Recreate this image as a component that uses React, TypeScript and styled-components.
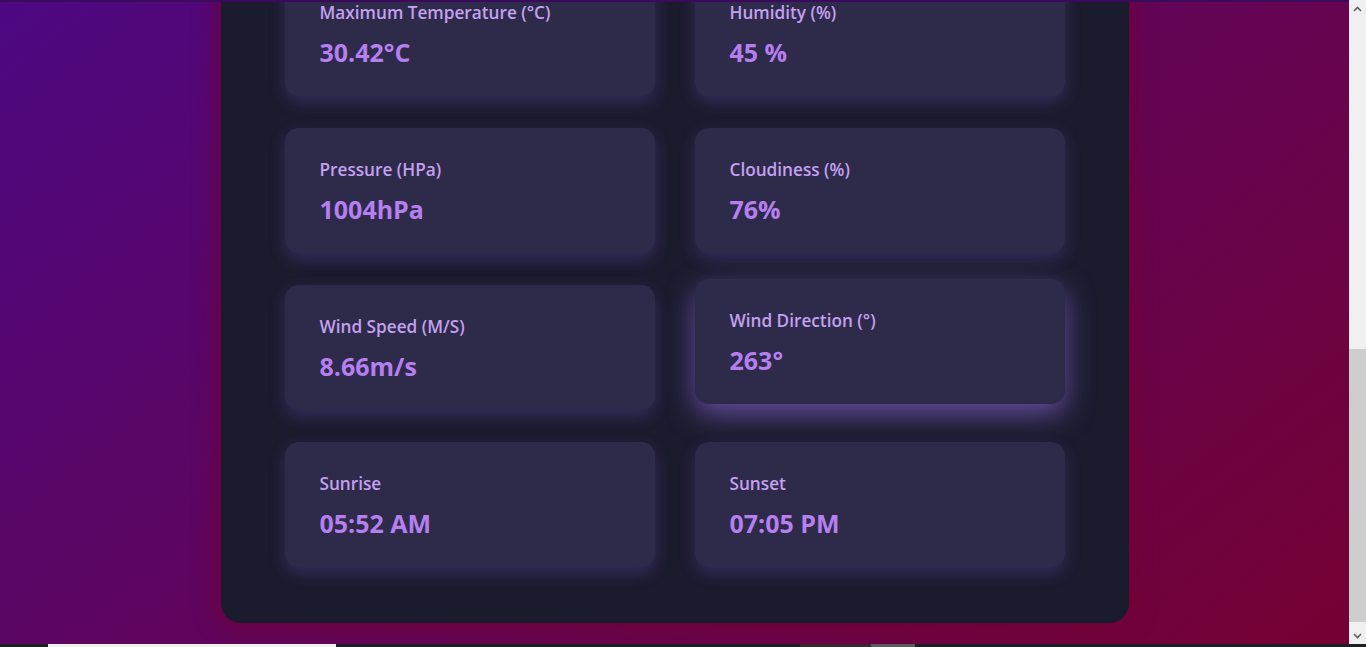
import React from "react";
import styled, { createGlobalStyle } from "styled-components";

const Global = createGlobalStyle`
  html, body { margin: 0; padding: 0; overflow: hidden; }
  body { font-family: "Open Sans", "Noto Sans", sans-serif; background: #1e1e26; }
  * { box-sizing: border-box; }
`;

const Screen = styled.div`
  width: 1366px;
  height: 647px;
  display: grid;
  grid-template-columns: 1349px 17px;
  grid-template-rows: 644px 3px;
`;

const Viewport = styled.div`
  position: relative;
  overflow: hidden;
  background: linear-gradient(142deg, #4d0882 0%, #7c0024 118%);
  border-top: 2px solid #3b0a5c;
`;

const Page = styled.main`
  margin-top: -31px;
  display: flex;
  justify-content: center;
`;

const Panel = styled.section`
  width: 908px;
  background: #1b1b2e;
  border-radius: 0 0 20px 20px;
  padding: 0 64px 56px;
  box-shadow: 0 0 22px 4px rgba(115, 0, 48, 0.75);
`;

const Grid = styled.div`
  display: grid;
  grid-template-columns: 370px 370px;
  column-gap: 40px;
  row-gap: 32px;
`;

const Card = styled.div<{ $hover?: boolean }>`
  height: 125px;
  background: #2e2a4a;
  border-radius: 14px;
  padding: 1px 35px 0;
  display: flex;
  flex-direction: column;
  justify-content: center;
  gap: 11px;
  box-shadow: ${(p) =>
    p.$hover
      ? "0 10px 28px rgba(150, 110, 230, 0.6)"
      : "0 6px 16px rgba(110, 80, 190, 0.32)"};
  transform: ${(p) => (p.$hover ? "translateY(-6px)" : "none")};
`;

const Label = styled.div`
  font-size: 17.2px;
  line-height: 24px;
  font-weight: 600;
  color: #c4a0f0;
`;

const Value = styled.div`
  font-size: 25px;
  line-height: 32px;
  font-weight: 700;
  color: #b67ff0;
`;

const ScrollBar = styled.div`
  background: #f0f0f0;
  display: flex;
  flex-direction: column;
`;

const Arrow = styled.div`
  height: 17px;
  display: flex;
  align-items: center;
  justify-content: center;
`;

const Track = styled.div`
  flex: 1;
  display: flex;
  flex-direction: column;
  justify-content: flex-end;
  padding-bottom: 5px;
`;

const Thumb = styled.div`
  height: 273px;
  background: #cdcdcd;
`;

const BottomStrip = styled.div`
  grid-column: 1 / 3;
  background: #1e1e26;
  position: relative;
`;

const StripSeg = styled.div<{ $left: number; $w: number; $c: string }>`
  position: absolute;
  top: 0;
  bottom: 0;
  left: ${(p) => p.$left}px;
  width: ${(p) => p.$w}px;
  background: ${(p) => p.$c};
`;

const items = [
  { label: "Maximum Temperature (°C)", value: "30.42°C" },
  { label: "Humidity (%)", value: "45 %" },
  { label: "Pressure (HPa)", value: "1004hPa" },
  { label: "Cloudiness (%)", value: "76%" },
  { label: "Wind Speed (M/S)", value: "8.66m/s" },
  { label: "Wind Direction (°)", value: "263°", hover: true },
  { label: "Sunrise", value: "05:52 AM" },
  { label: "Sunset", value: "07:05 PM" },
];

const Chevron = ({ up }: { up?: boolean }) => (
  <svg width="9" height="6" viewBox="0 0 9 6">
    <path
      d={up ? "M1 5 L4.5 1.5 L8 5" : "M1 1 L4.5 4.5 L8 1"}
      fill="none"
      stroke="#606060"
      strokeWidth="1.6"
    />
  </svg>
);

export default function App() {
  return (
    <>
      <Global />
      <Screen>
        <Viewport>
          <Page>
            <Panel>
              <Grid>
                {items.map((it) => (
                  <Card key={it.label} $hover={it.hover}>
                    <Label>{it.label}</Label>
                    <Value>{it.value}</Value>
                  </Card>
                ))}
              </Grid>
            </Panel>
          </Page>
        </Viewport>
        <ScrollBar>
          <Arrow>
            <Chevron up />
          </Arrow>
          <Track>
            <Thumb />
          </Track>
          <Arrow>
            <Chevron />
          </Arrow>
        </ScrollBar>
        <BottomStrip>
          <StripSeg $left={48} $w={288} $c="#f0f0f0" />
          <StripSeg $left={800} $w={71} $c="#3a2630" />
          <StripSeg $left={871} $w={44} $c="#5d5a60" />
        </BottomStrip>
      </Screen>
    </>
  );
}
